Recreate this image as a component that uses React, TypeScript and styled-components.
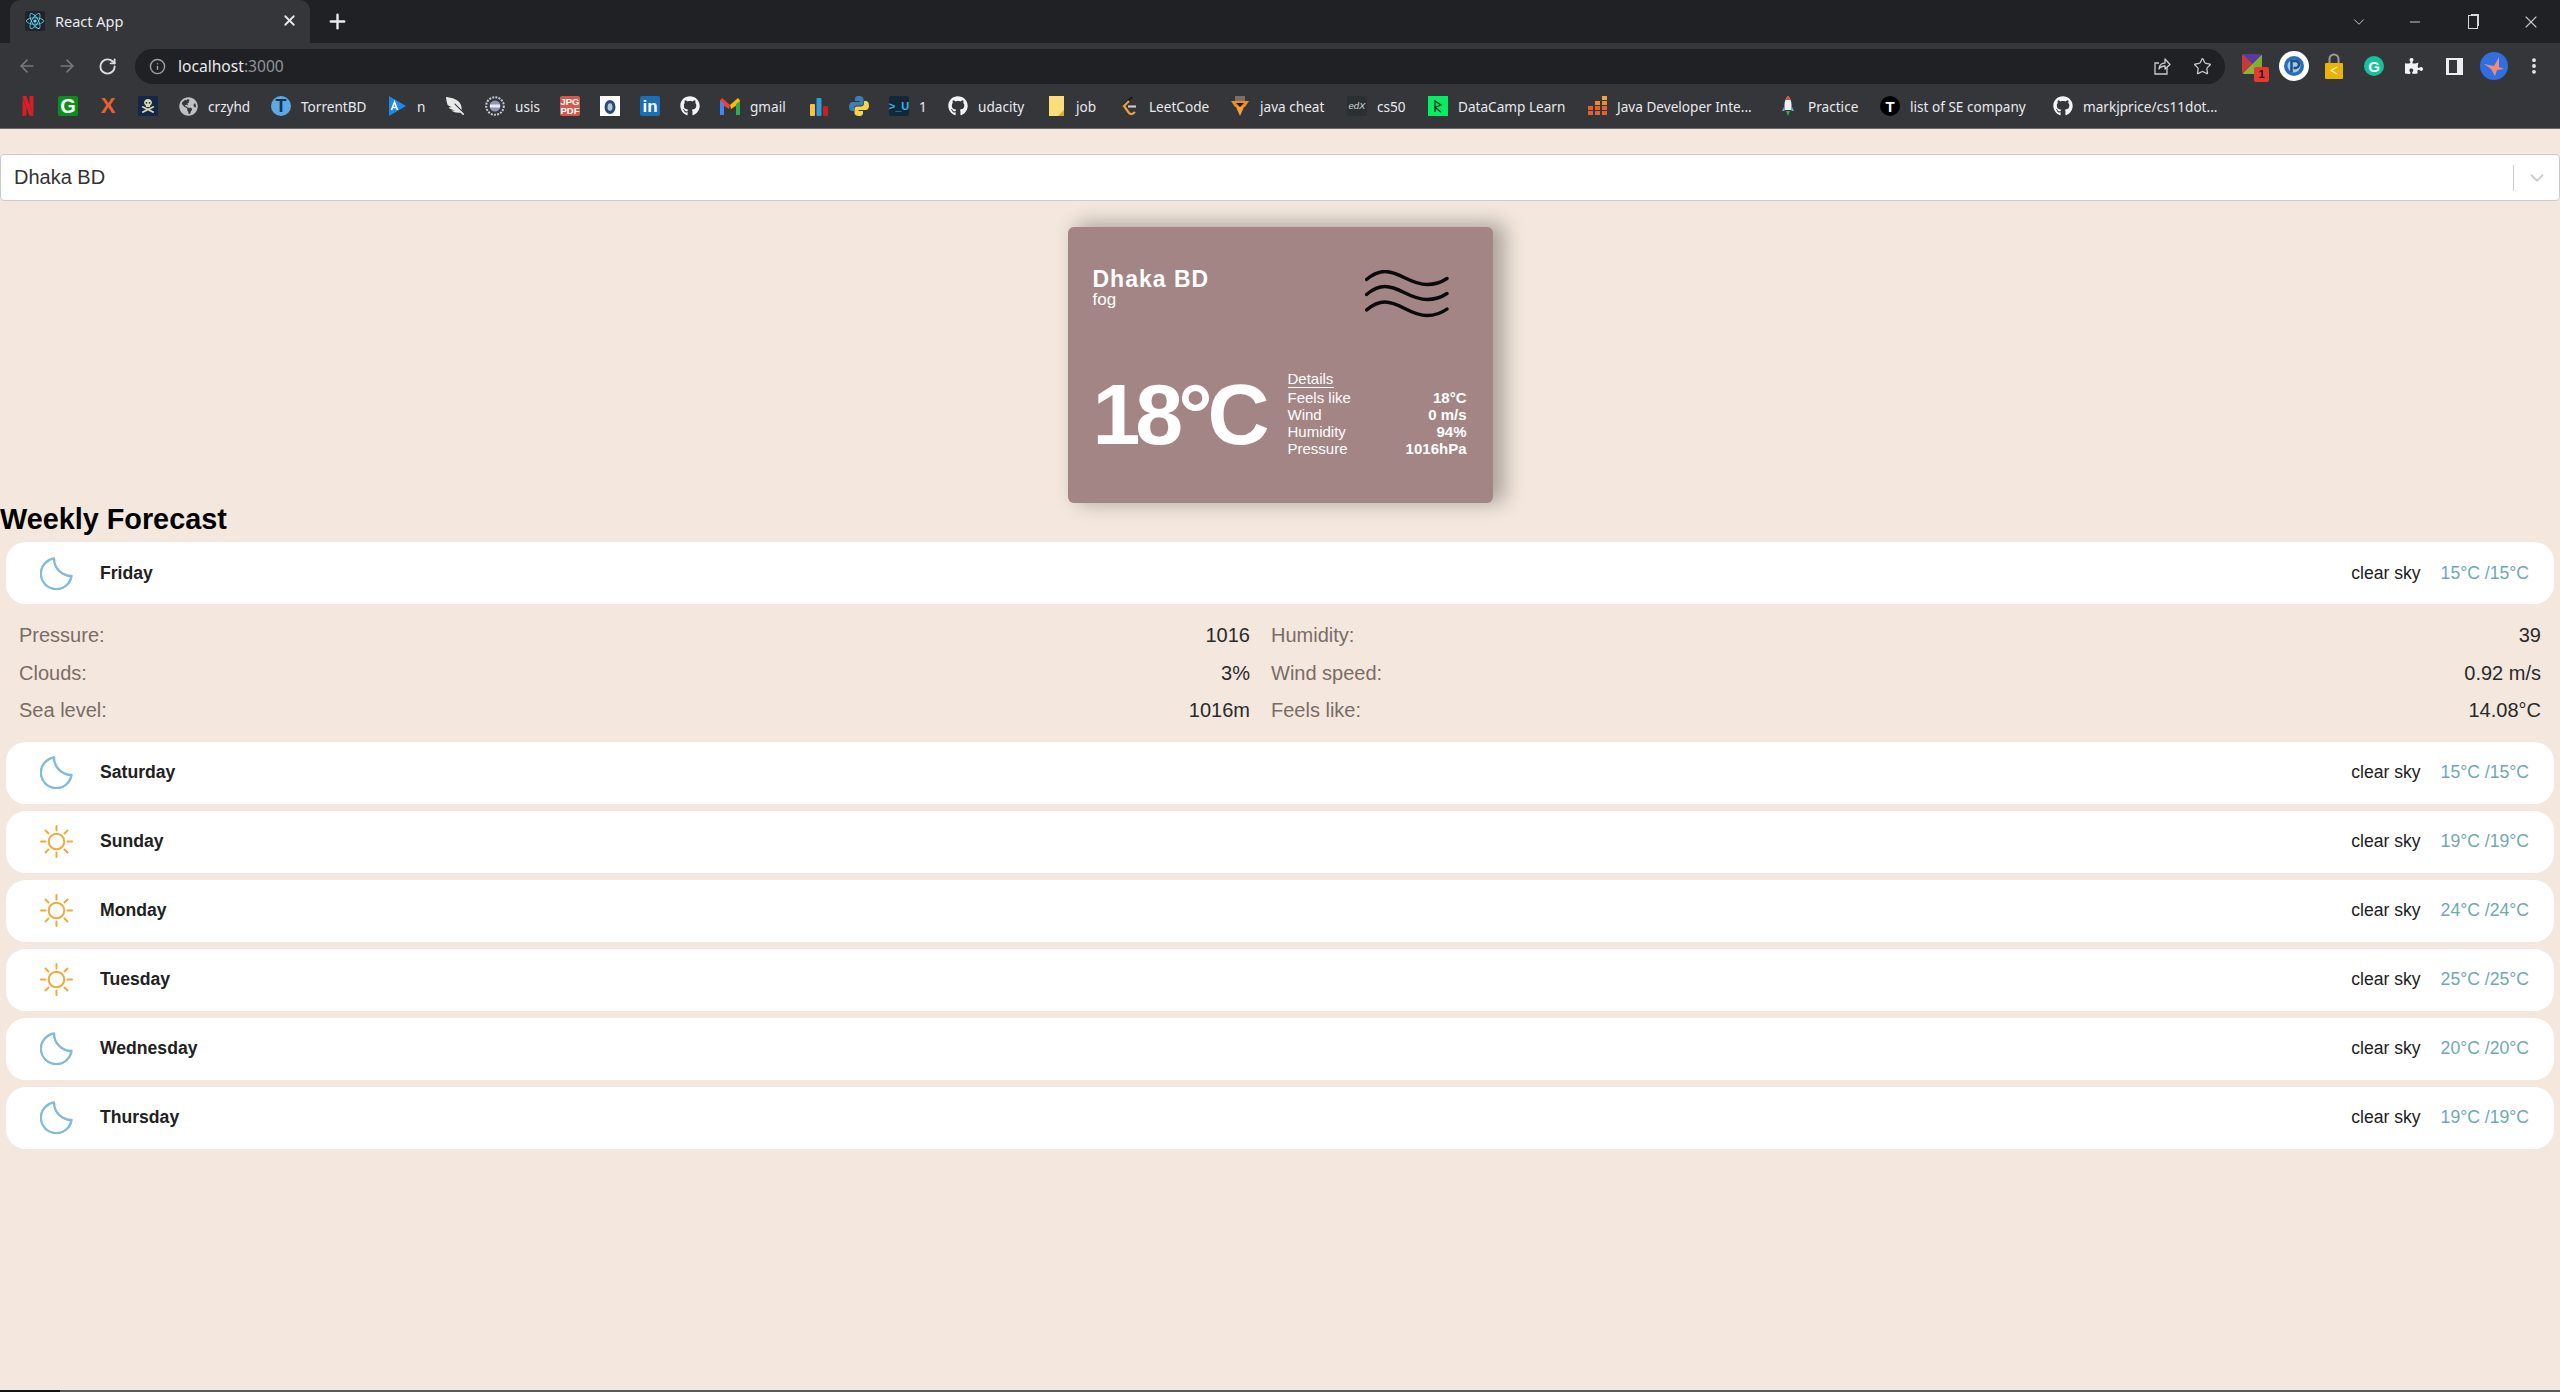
import type { ReactNode } from "react"
import styled, { createGlobalStyle } from "styled-components"
import { ArrowLeft, ArrowRight, ChevronDown, EllipsisVertical, Info, Minus, Plus, RotateCw, Star, X } from "lucide-react"
import { FaFeatherAlt, FaGithub, FaGlobeAmericas, FaPuzzlePiece, FaReact, FaSkullCrossbones } from "react-icons/fa"
import { SiNetflix } from "react-icons/si"

const GlobalStyle = createGlobalStyle`
  html, body {
    margin: 0;
    padding: 0;
    background: #f4e8de;
  }
  * {
    box-sizing: border-box;
  }
`

const Screen = styled.div`
  height: 1392px;
  display: flex;
  flex-direction: column;
  overflow: hidden;
  font-family: "Liberation Sans", Arial, sans-serif;
`

// browser chrome
const TabStrip = styled.div`
  height: 43px;
  flex: none;
  display: flex;
  align-items: center;
  padding-left: 10px;
  background: #202124;
`

const Tab = styled.div`
  width: 300px;
  height: 43px;
  display: flex;
  align-items: center;
  padding: 0 12px 2px 15px;
  background: #35363a;
  border-radius: 10px 10px 0 0;
  color: #e8eaed;
  font: 14.5px "Noto Sans", sans-serif;
`

const TabTitle = styled.span`
  flex: 1;
  margin-left: 10px;
`

const NewTab = styled.div`
  display: flex;
  margin-left: 16px;
  color: #e8eaed;
`

const WindowButtons = styled.div`
  margin-left: auto;
  display: flex;
  align-items: center;
  color: #c4c7c9;
`

const WindowButton = styled.div<{ $narrow?: boolean }>`
  width: ${(p) => (p.$narrow ? "30px" : "58px")};
  margin-right: ${(p) => (p.$narrow ? "12px" : "0")};
  height: 36px;
  display: flex;
  align-items: center;
  justify-content: center;
`

const RestoreGlyph = styled.div`
  width: 10px;
  height: 14px;
  border: 1.5px solid #d5d7d9;
  box-shadow: 2px -2px 0 -1px #d5d7d9;
`

const Toolbar = styled.div`
  height: 41px;
  flex: none;
  display: flex;
  align-items: center;
  padding: 5px 6px 0 7px;
  background: #35363a;
`

const NavButton = styled.div<{ $dim?: boolean }>`
  width: 40px;
  height: 35px;
  flex: none;
  display: flex;
  align-items: center;
  justify-content: center;
  color: ${(p) => (p.$dim ? "#75787c" : "#dadce0")};
`

const Omnibox = styled.div`
  flex: 1;
  height: 35px;
  margin: 0 9px 0 8px;
  display: flex;
  align-items: center;
  padding: 0 3px 0 14px;
  border-radius: 18px;
  background: #202124;
  color: #9aa0a6;
`

const Url = styled.div`
  flex: 1;
  margin-left: 12px;
  font: 15.6px "Noto Sans", sans-serif;
  color: #8f9499;
`

const UrlHost = styled.span`
  color: #e8eaed;
`

const OmniAction = styled.div`
  width: 40px;
  display: flex;
  justify-content: center;
  color: #c8cbcf;
`

const BookmarkBar = styled.div`
  height: 45px;
  flex: none;
  display: flex;
  align-items: center;
  padding-left: 8px;
  background: #35363a;
  border-bottom: 1px solid #6a6a6a;
`

const Bookmark = styled.div`
  display: flex;
  align-items: center;
  gap: 10px;
  padding: 0 10px;
`

const BookmarkLabel = styled.span<{ $w: number }>`
  width: ${(p) => p.$w}px;
  white-space: nowrap;
  color: #e8eaed;
  font: 13.6px "Noto Sans", sans-serif;
`

const FavSlot = styled.div`
  width: 20px;
  height: 20px;
  display: flex;
  align-items: center;
  justify-content: center;
  flex: none;
`

const LetterFav = styled.div<{ $bg?: string; $fg: string; $size?: number; $round?: boolean }>`
  width: 20px;
  height: 20px;
  display: flex;
  align-items: center;
  justify-content: center;
  border-radius: ${(p) => (p.$round ? "50%" : "2px")};
  background: ${(p) => p.$bg ?? "transparent"};
  color: ${(p) => p.$fg};
  font: bold ${(p) => p.$size ?? 16}px/1 "Liberation Sans", sans-serif;
  text-align: center;
`

const EdxFav = styled(LetterFav)`
  font-style: italic;
  font-weight: 400;
`

const Quill = styled(FaFeatherAlt)`
  transform: scaleX(-1);
`

const ExtBadgeWrap = styled.div`
  position: relative;
  width: 20px;
  height: 20px;
  margin: -4px 4px 0 0;
  background: conic-gradient(from 45deg, #7dae2f 0 25%, #8ab437 25% 50%, #c23b3b 50% 75%, #5b3aa0 75% 100%);
  border-radius: 2px;
`

const ExtBadge = styled.span`
  position: absolute;
  right: -7px;
  bottom: -8px;
  width: 15px;
  height: 15px;
  background: #e53935;
  border-radius: 2px;
  color: #1c1c1c;
  font: bold 11px/15px "Liberation Sans", sans-serif;
  text-align: center;
`

const SidePanelGlyph = styled.div`
  width: 17px;
  height: 17px;
  border-style: solid;
  border-color: #eceef0;
  border-width: 2px 6px 2px 3px;
`

// page
const Main = styled.main`
  flex: 1;
  min-height: 0;
  background: #f4e8de;
  padding-top: 25px;
`

const SelectBox = styled.div`
  height: 47px;
  display: flex;
  align-items: center;
  background: #fff;
  border: 1px solid #cccccc;
  border-radius: 4px;
  color: #333;
  font-size: 20px;
  padding-left: 13px;
`

const SelectValue = styled.div`
  flex: 1;
`

const SelectSeparator = styled.div`
  width: 1px;
  height: 26px;
  background: #cccccc;
`

const SelectArrow = styled.div`
  width: 45px;
  display: flex;
  justify-content: center;
  color: #cccccc;
`

const Card = styled.section`
  width: 425px;
  height: 276px;
  margin: 26px auto 0;
  padding: 0 26px 0 25px;
  display: flex;
  flex-direction: column;
  border-radius: 6px;
  background: #a48585;
  color: #fff;
  box-shadow: 10px -2px 20px 2px rgba(0, 0, 0, 0.3);
`

const CardTop = styled.div`
  display: flex;
  justify-content: space-between;
  padding: 40px 18px 0 0;
`

const FogSlot = styled.div`
  display: flex;
  margin-top: 3px;
`

const City = styled.p`
  margin: 0;
  font-size: 23px;
  line-height: 24px;
  font-weight: 700;
  letter-spacing: 1px;
`

const Condition = styled.p`
  margin: 0;
  font-size: 17px;
  line-height: 17px;
`

const CardBottom = styled.div`
  display: flex;
  align-items: center;
  justify-content: space-between;
  margin-top: 52px;
`

const Temperature = styled.p`
  margin: 0;
  font-size: 86px;
  line-height: 1;
  font-weight: 700;
  letter-spacing: -5px;
`

const DetailsTable = styled.div`
  width: 179px;
  font-size: 15px;
  line-height: 17px;
`

const DetailsTitle = styled.div`
  width: 46px;
  border-bottom: 1px solid #fff;
  margin-bottom: 1px;
`

const DetailsRow = styled.div`
  display: flex;
  justify-content: space-between;
`

const DetailsValue = styled.span`
  font-weight: 700;
`

const Heading = styled.h2`
  margin: 0;
  color: #000;
  font-size: 28.8px;
  line-height: 32px;
  font-weight: 700;
`

const Forecast = styled.div`
  padding: 0 6px;
`

const DayRow = styled.div`
  height: 62px;
  margin-top: 7px;
  display: flex;
  align-items: center;
  padding: 0 25px 0 34px;
  background: #fff;
  border-radius: 20px;
  font-size: 17.6px;
`

const DayName = styled.span`
  flex: 1;
  margin-left: 27px;
  color: #212121;
  font-weight: 700;
`

const DayCondition = styled.span`
  color: #212121;
`

const DayTemp = styled.span`
  margin-left: 20px;
  color: #6fa8b3;
`

const DayDetails = styled.div`
  display: grid;
  grid-template-columns: 1231fr 1270fr;
  column-gap: 21px;
  padding: 13px 13px 5px;
`

const DetailCell = styled.div`
  height: 37.5px;
  display: flex;
  align-items: center;
  justify-content: space-between;
  font-size: 20px;
`

const DetailLabel = styled.span`
  color: #7a6c67;
`

const DetailValue = styled.span`
  color: #2a2a2a;
`

const BottomEdge = styled.div`
  height: 2px;
  flex: none;
  background: linear-gradient(90deg, #141414 0 60px, #5a5a5a 60px 100%);
`

// drawn icons
const FogIcon = () => (
  <svg width="84" height="48" viewBox="0 0 84 48" fill="none" stroke="#0a0a0a" strokeWidth="3.4" strokeLinecap="round">
    <path d="M1.5 9.5C8 4 13 1.5 20 1.5C35 1.5 45 14.5 62 14.5C70 14.5 76 12.5 82 8.5" />
    <path d="M1.5 24.5C8 19 13 16.5 20 16.5C35 16.5 45 29.5 62 29.5C70 29.5 76 27.5 82 23.5" />
    <path d="M1.5 40C8 34.5 13 32 20 32C35 32 45 45.5 62 45.5C70 45.5 76 43.5 82 39" />
  </svg>
)

const MoonIcon = () => (
  <svg width="33" height="33" viewBox="0 0 33 33" fill="none" stroke="#83bbd6" strokeWidth="2.4">
    <path d="M14 1.5A15.4 15.4 0 1 0 31.5 19A17.5 17.5 0 0 1 14 1.5Z" strokeLinejoin="round" />
  </svg>
)

const SunIcon = () => (
  <svg width="33" height="33" viewBox="0 0 33 33" fill="none" stroke="#f2a93b" strokeWidth="2" strokeLinecap="round">
    <circle cx="16.5" cy="16.5" r="7.8" />
    <path d="M16.5 1v4.5M16.5 27.5V32M1 16.5h4.5M27.5 16.5H32M5.5 5.5l3 3M24.5 24.5l3 3M27.5 5.5l-3 3M8.5 24.5l-3 3" />
  </svg>
)

const ShareGlyph = () => (
  <svg width="20" height="20" viewBox="0 0 20 20" fill="none" stroke="currentColor" strokeWidth="1.3">
    <path d="M15 11v7H3V7h4" />
    <path d="M7 13c0-4 3-6 6-6V3l5 5.5L13 13V10c-3 0-5 1-6 3Z" strokeLinejoin="round" />
  </svg>
)

const GmailFav = () => (
  <svg width="20" height="18" viewBox="0 0 20 18">
    <path d="M0 3.5 2 1l8 7-1 4-9-6Z" fill="#ea4335" />
    <path d="M20 3.5 18 1l-8 7 1 4 9-6Z" fill="#fbbc04" />
    <path d="M0 4v14h4V7Z" fill="#4285f4" />
    <path d="M20 4v14h-4V7Z" fill="#34a853" />
  </svg>
)

const BarsFav = () => (
  <svg width="20" height="20" viewBox="0 0 20 20">
    <rect x="1" y="8" width="5" height="12" rx="1" fill="#f4c542" />
    <rect x="7.5" y="2" width="5" height="18" rx="1" fill="#2d9cdb" />
    <rect x="14" y="10" width="5" height="10" rx="1" fill="#c5221f" />
  </svg>
)

const PythonFav = () => (
  <svg width="20" height="20" viewBox="0 0 20 20">
    <path d="M10 0C6.5 0 6 1.5 6 3v2h4.5v1H3.5C1.5 6 0 7.5 0 10.5S1.5 15 3 15h2v-2.5C5 10.5 6.5 9.5 8 9.5h4c1.5 0 2.5-1 2.5-2.5V3C14.5 1 12.5 0 10 0Z" fill="#3b7fb8" />
    <path d="M10 20c3.5 0 4-1.5 4-3v-2H9.5v-1h7c2 0 3.5-1.5 3.5-4.5S18.5 5 17 5h-2v2.5c0 2-1.5 3-3 3H8c-1.5 0-2.5 1-2.5 2.5v4c0 2 2 3 4.5 3Z" fill="#f7d44c" />
  </svg>
)

const AzureFav = () => (
  <svg width="18" height="20" viewBox="0 0 18 20">
    <path d="M1 0 18 10 1 20Z" fill="#1e88e5" />
    <path d="M3.5 14 6.5 6 9.5 14M4.5 11.5h4" stroke="#fff" strokeWidth="1.6" fill="none" />
  </svg>
)

const UsisFav = () => (
  <svg width="20" height="20" viewBox="0 0 20 20" fill="none">
    <circle cx="10" cy="10" r="8.8" stroke="#c5cad6" strokeWidth="2" strokeDasharray="2 1.2" />
    <circle cx="10" cy="10" r="5.5" fill="#8d97b3" />
    <rect x="5" y="8.5" width="10" height="3" fill="#e8eaf0" />
  </svg>
)

const ShieldFav = () => (
  <svg width="20" height="20" viewBox="0 0 20 20">
    <rect width="20" height="20" fill="#fff" />
    <ellipse cx="10" cy="11" rx="5.5" ry="7" fill="#2b4a73" />
    <ellipse cx="10" cy="11" rx="2.5" ry="3.8" fill="#b9c5d6" />
  </svg>
)

const FolderFav = () => (
  <svg width="15" height="20" viewBox="0 0 15 20">
    <path d="M0 0h15v20H0Z" fill="#fddc7a" />
    <path d="M9 20h6v-6Z" fill="#d9a93a" />
  </svg>
)

const LeetFav = () => (
  <svg width="18" height="20" viewBox="0 0 18 20" fill="none" strokeWidth="2.2">
    <path d="M12 1 4 9" stroke="#1a1a1a" />
    <path d="M9 5 4 10l5 7c2 2 4 1 6-1" stroke="#e8a33d" />
    <path d="M8 10.5h8" stroke="#c9cbcc" />
  </svg>
)

const JavaCheatFav = () => (
  <svg width="20" height="20" viewBox="0 0 20 20">
    <rect x="5" y="0" width="10" height="5" fill="#77706a" />
    <path d="M1 5h18l-4 6H5Z" fill="#f08a24" />
    <path d="M6 7h8l-4 4Z" fill="#1d1d1d" />
    <path d="M6 11h8l-4 9Z" fill="#f5a23c" />
  </svg>
)

const DataCampFav = () => (
  <svg width="20" height="20" viewBox="0 0 20 20">
    <rect width="20" height="20" fill="#03ef62" />
    <path d="M7 4v12M7 5l6 4-6 2.5 6 4.5" stroke="#05192d" strokeWidth="1.2" fill="none" />
  </svg>
)

const StairsFav = () => (
  <svg width="20" height="20" viewBox="0 0 20 20" fill="#e2622f">
    <rect x="1" y="15" width="5" height="4" />
    <rect x="8" y="15" width="5" height="4" />
    <rect x="15" y="15" width="5" height="4" />
    <rect x="1" y="10" width="5" height="4" />
    <rect x="8" y="10" width="5" height="4" />
    <rect x="15" y="10" width="5" height="4" />
    <rect x="8" y="5" width="5" height="4" fill="#f08a24" />
    <rect x="15" y="5" width="5" height="4" fill="#f08a24" />
    <rect x="15" y="0" width="5" height="4" fill="#f5a23c" />
  </svg>
)

const RocketFav = () => (
  <svg width="12" height="20" viewBox="0 0 12 20">
    <path d="M6 0c2.5 2.5 3.5 5.5 3.5 9v5h-7V9C2.5 5.5 3.5 2.5 6 0Z" fill="#eef1f5" />
    <path d="M6 0c1.3 1.2 2.2 2.5 2.7 4H3.3C3.8 2.5 4.7 1.2 6 0Z" fill="#e04b3a" />
    <path d="M2.5 10 0 15h2.5ZM9.5 10l2.5 5H9.5Z" fill="#7fa6d6" />
    <path d="M4 15h4l-2 5Z" fill="#34a853" />
  </svg>
)

const PFav = () => (
  <svg width="30" height="30" viewBox="0 0 30 30">
    <circle cx="15" cy="15" r="15" fill="#fff" />
    <circle cx="15" cy="15" r="10" fill="#2a6fb5" />
    <circle cx="15" cy="15" r="6.5" fill="#a9c9e6" />
    <path d="M12.5 21V10h4a3.5 3.5 0 0 1 0 7h-2" fill="none" stroke="#1c4f8a" strokeWidth="2.5" />
  </svg>
)

const LockFav = () => (
  <svg width="18" height="26" viewBox="0 0 18 26" fill="none">
    <path d="M4.5 12V6a4.5 4.5 0 0 1 9 0v6" stroke="#9b9b9b" strokeWidth="2" />
    <rect y="10" width="18" height="16" rx="1" fill="#eab308" />
    <path d="M12 14 6 17.5l6 3.5" stroke="#fff2c0" strokeWidth="1.2" />
  </svg>
)

const AvatarFav = () => (
  <svg width="28" height="28" viewBox="0 0 28 28">
    <circle cx="14" cy="14" r="14" fill="#2f6fe0" />
    <path d="M4 12 14 14 19 5 19 15 24 17 17 18 15 24 11 17Z" fill="#ef8a80" />
  </svg>
)

type BookmarkItem = { icon: ReactNode; label?: string; w?: number }

const bookmarks: BookmarkItem[] = [
  { icon: <SiNetflix size={22} color="#d81f26" /> },
  { icon: <LetterFav $bg="#0b8f1a" $fg="#fff" $size={20}>G</LetterFav> },
  { icon: <LetterFav $fg="#e8622c" $size={22}>X</LetterFav> },
  { icon: <LetterFav $bg="#14264b" $fg="#d8d8a8"><FaSkullCrossbones size={14} /></LetterFav> },
  { icon: <FaGlobeAmericas size={19} color="#bdc1c6" />, label: "crzyhd", w: 43 },
  { icon: <LetterFav $bg="#5aa9e6" $fg="#17344d" $size={18} $round>T</LetterFav>, label: "TorrentBD", w: 66 },
  { icon: <AzureFav />, label: "n", w: 8 },
  { icon: <Quill size={18} color="#e8e8e8" /> },
  { icon: <UsisFav />, label: "usis", w: 25 },
  { icon: <LetterFav $bg="#d6584a" $fg="#fff" $size={9.5}>JPG PDF</LetterFav> },
  { icon: <ShieldFav /> },
  { icon: <LetterFav $bg="#1a6fb5" $fg="#fff" $size={17}>in</LetterFav> },
  { icon: <FaGithub size={20} color="#f1f3f4" /> },
  { icon: <GmailFav />, label: "gmail", w: 39 },
  { icon: <BarsFav /> },
  { icon: <PythonFav /> },
  { icon: <LetterFav $bg="#122838" $fg="#33b5e5" $size={11}>&gt;_U</LetterFav>, label: "1", w: 9 },
  { icon: <FaGithub size={20} color="#f1f3f4" />, label: "udacity", w: 48 },
  { icon: <FolderFav />, label: "job", w: 23 },
  { icon: <LeetFav />, label: "LeetCode", w: 61 },
  { icon: <JavaCheatFav />, label: "java cheat", w: 67 },
  { icon: <EdxFav $fg="#cfd8d8" $bg="#2a3032" $size={9.5}>edX</EdxFav>, label: "cs50", w: 31 },
  { icon: <DataCampFav />, label: "DataCamp Learn", w: 109 },
  { icon: <StairsFav />, label: "Java Developer Inte...", w: 141 },
  { icon: <RocketFav />, label: "Practice", w: 52 },
  { icon: <LetterFav $bg="#000" $fg="#fff" $size={15} $round>T</LetterFav>, label: "list of SE company", w: 123 },
  { icon: <FaGithub size={20} color="#f1f3f4" />, label: "markjprice/cs11dot...", w: 139 },
]

type ForecastDay = { day: string; icon: "moon" | "sun"; temp: string }

const week: ForecastDay[] = [
  { day: "Friday", icon: "moon", temp: "15°C /15°C" },
  { day: "Saturday", icon: "moon", temp: "15°C /15°C" },
  { day: "Sunday", icon: "sun", temp: "19°C /19°C" },
  { day: "Monday", icon: "sun", temp: "24°C /24°C" },
  { day: "Tuesday", icon: "sun", temp: "25°C /25°C" },
  { day: "Wednesday", icon: "moon", temp: "20°C /20°C" },
  { day: "Thursday", icon: "moon", temp: "19°C /19°C" },
]

const fridayDetails = [
  ["Pressure:", "1016"],
  ["Humidity:", "39"],
  ["Clouds:", "3%"],
  ["Wind speed:", "0.92 m/s"],
  ["Sea level:", "1016m"],
  ["Feels like:", "14.08°C"],
]

const currentDetails = [
  ["Feels like", "18°C"],
  ["Wind", "0 m/s"],
  ["Humidity", "94%"],
  ["Pressure", "1016hPa"],
]

function BrowserChrome() {
  return (
    <>
      <TabStrip>
        <Tab>
          <LetterFav $bg="#20232a" $fg="#61dafb"><FaReact size={18} /></LetterFav>
          <TabTitle>React App</TabTitle>
          <X size={17} strokeWidth={2.5} />
        </Tab>
        <NewTab><Plus size={23} strokeWidth={2.5} /></NewTab>
        <WindowButtons>
          <WindowButton $narrow><ChevronDown size={18} strokeWidth={1.3} /></WindowButton>
          <WindowButton><Minus size={16} strokeWidth={1.5} /></WindowButton>
          <WindowButton><RestoreGlyph /></WindowButton>
          <WindowButton><X size={20} strokeWidth={1.3} /></WindowButton>
        </WindowButtons>
      </TabStrip>
      <Toolbar>
        <NavButton $dim><ArrowLeft size={20} /></NavButton>
        <NavButton $dim><ArrowRight size={20} /></NavButton>
        <NavButton><RotateCw size={19} strokeWidth={2.4} /></NavButton>
        <Omnibox>
          <Info size={17} />
          <Url><UrlHost>localhost</UrlHost>:3000</Url>
          <OmniAction><ShareGlyph /></OmniAction>
          <OmniAction><Star size={19} strokeWidth={1.6} /></OmniAction>
        </Omnibox>
        <NavButton><ExtBadgeWrap><ExtBadge>1</ExtBadge></ExtBadgeWrap></NavButton>
        <NavButton><PFav /></NavButton>
        <NavButton><LockFav /></NavButton>
        <NavButton><LetterFav $bg="#15c39a" $fg="#fff" $size={15} $round>G</LetterFav></NavButton>
        <NavButton><FaPuzzlePiece size={18} color="#f1f3f4" /></NavButton>
        <NavButton><SidePanelGlyph /></NavButton>
        <NavButton><AvatarFav /></NavButton>
        <NavButton><EllipsisVertical size={20} strokeWidth={2.6} color="#e8eaed" /></NavButton>
      </Toolbar>
      <BookmarkBar>
        {bookmarks.map((b, i) => (
          <Bookmark key={i}>
            <FavSlot>{b.icon}</FavSlot>
            {b.label && <BookmarkLabel $w={b.w ?? 40}>{b.label}</BookmarkLabel>}
          </Bookmark>
        ))}
      </BookmarkBar>
    </>
  )
}

export default function App() {
  return (
    <Screen>
      <GlobalStyle />
      <BrowserChrome />
      <Main>
        <SelectBox>
          <SelectValue>Dhaka BD</SelectValue>
          <SelectSeparator />
          <SelectArrow><ChevronDown size={22} strokeWidth={2} /></SelectArrow>
        </SelectBox>

        <Card>
          <CardTop>
            <div>
              <City>Dhaka BD</City>
              <Condition>fog</Condition>
            </div>
            <FogSlot><FogIcon /></FogSlot>
          </CardTop>
          <CardBottom>
            <Temperature>18°C</Temperature>
            <DetailsTable>
              <DetailsTitle>Details</DetailsTitle>
              {currentDetails.map(([label, value]) => (
                <DetailsRow key={label}>
                  <span>{label}</span>
                  <DetailsValue>{value}</DetailsValue>
                </DetailsRow>
              ))}
            </DetailsTable>
          </CardBottom>
        </Card>

        <Heading>Weekly Forecast</Heading>
        <Forecast>
          {week.map((d, i) => (
            <div key={d.day}>
              <DayRow>
                {d.icon === "moon" ? <MoonIcon /> : <SunIcon />}
                <DayName>{d.day}</DayName>
                <DayCondition>clear sky</DayCondition>
                <DayTemp>{d.temp}</DayTemp>
              </DayRow>
              {i === 0 && (
                <DayDetails>
                  {fridayDetails.map(([label, value]) => (
                    <DetailCell key={label}>
                      <DetailLabel>{label}</DetailLabel>
                      <DetailValue>{value}</DetailValue>
                    </DetailCell>
                  ))}
                </DayDetails>
              )}
            </div>
          ))}
        </Forecast>
      </Main>
      <BottomEdge />
    </Screen>
  )
}
